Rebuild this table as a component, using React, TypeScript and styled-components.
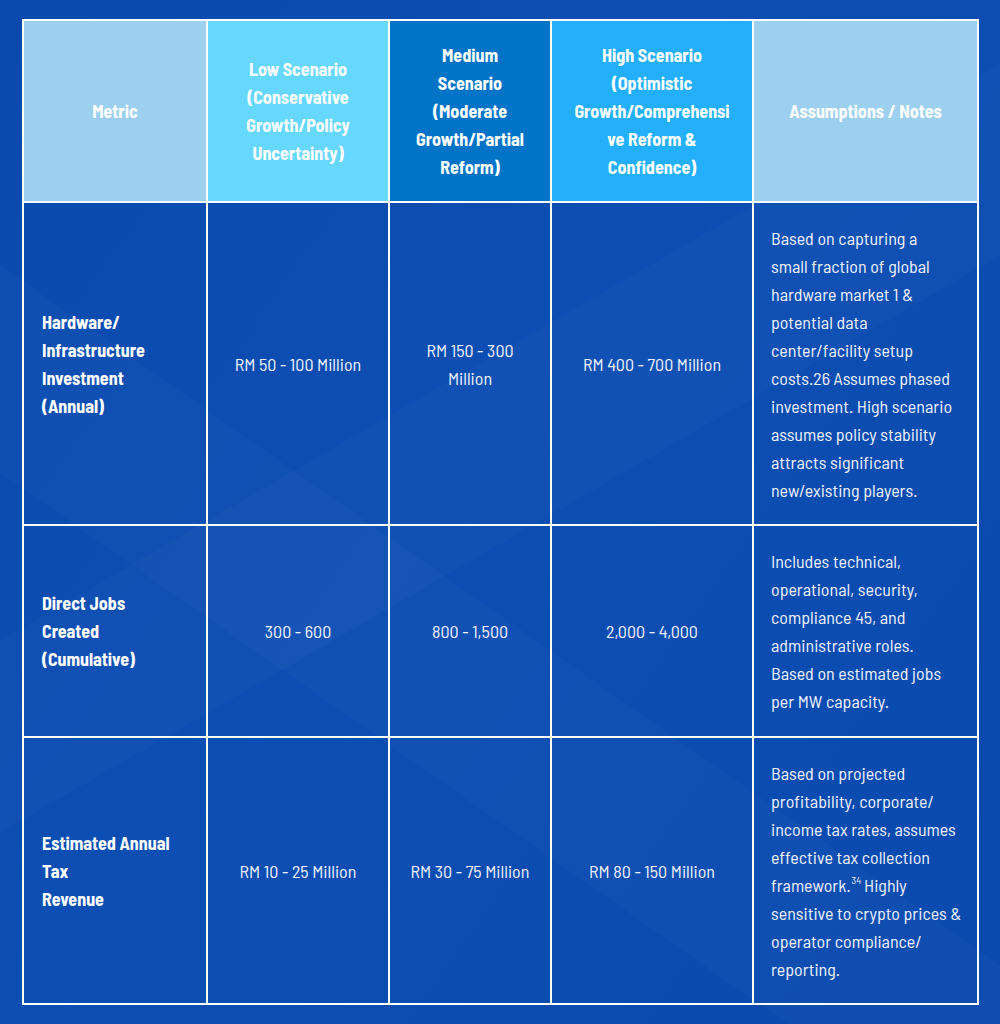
import React from "react";
import styled, { createGlobalStyle } from "styled-components";

const GlobalStyle = createGlobalStyle`
  html, body {
    margin: 0;
    padding: 0;
  }
  body {
    background: #0a4baf;
    font-family: "Barlow Semi Condensed", "Roboto Condensed", "Liberation Sans", sans-serif;
  }
`;

const Page = styled.div`
  width: 1000px;
  height: 1024px;
  box-sizing: border-box;
  padding: 19px 21px 0 22px;
  background:
    linear-gradient(150deg, transparent 0%, transparent 40%, rgba(255,255,255,0.02) 40%, rgba(255,255,255,0.02) 52%, transparent 52%),
    linear-gradient(35deg, transparent 0%, transparent 32%, rgba(255,255,255,0.018) 32%, rgba(255,255,255,0.018) 44%, transparent 44%),
    linear-gradient(125deg, #0a4aae 0%, #0c4eb3 45%, #0a4aae 100%);
`;

const Table = styled.table`
  width: 955px;
  table-layout: fixed;
  border-collapse: collapse;
  border: 2px solid #ffffff;
`;

const HeadCell = styled.th<{ $bg: string }>`
  background: ${(p) => p.$bg};
  border: 2px solid #ffffff;
  color: #ffffff;
  font-weight: 700;
  font-size: 18px;
  line-height: 28px;
  text-align: center;
  vertical-align: middle;
  padding: 0 16px;
`;

const Row = styled.tr<{ $h: number }>`
  height: ${(p) => p.$h}px;
`;

const MetricCell = styled.td`
  border: 2px solid #ffffff;
  color: #ffffff;
  font-weight: 700;
  font-size: 18px;
  line-height: 28px;
  text-align: left;
  vertical-align: middle;
  padding: 0 18px;
`;

const ValueCell = styled.td`
  border: 2px solid #ffffff;
  color: #edf1fb;
  font-weight: 400;
  font-size: 18px;
  line-height: 28px;
  text-align: center;
  vertical-align: middle;
  padding: 0 16px;
`;

const NoteCell = styled.td`
  border: 2px solid #ffffff;
  color: #edf1fb;
  font-weight: 400;
  font-size: 18px;
  line-height: 28px;
  text-align: left;
  vertical-align: middle;
  padding: 0 14px 0 17px;
`;

const Sup = styled.sup`
  font-size: 10px;
  line-height: 0;
  vertical-align: 8px;
  margin: 0 3px 0 1px;
`;

const headers = [
  { bg: "#9dcfee", text: ["Metric"] },
  { bg: "#66d7fe", text: ["Low Scenario", "(Conservative", "Growth/Policy", "Uncertainty)"] },
  { bg: "#0274c8", text: ["Medium", "Scenario", "(Moderate", "Growth/Partial", "Reform)"] },
  { bg: "#23affc", text: ["High Scenario", "(Optimistic", "Growth/Comprehensi", "ve Reform &", "Confidence)"] },
  { bg: "#9dcfee", text: ["Assumptions / Notes"] },
];

const colWidths = [184, 182, 162, 202, 225];

const Lines = ({ lines }: { lines: string[] }) => (
  <>
    {lines.map((l, i) => (
      <React.Fragment key={i}>
        {i > 0 && <br />}
        {l}
      </React.Fragment>
    ))}
  </>
);

export default function App() {
  return (
    <>
      <GlobalStyle />
      <Page>
        <Table>
          <colgroup>
            {colWidths.map((w, i) => (
              <col key={i} style={{ width: w }} />
            ))}
          </colgroup>
          <thead>
            <Row $h={182}>
              {headers.map((h, i) => (
                <HeadCell key={i} $bg={h.bg}>
                  <Lines lines={h.text} />
                </HeadCell>
              ))}
            </Row>
          </thead>
          <tbody>
            <Row $h={323}>
              <MetricCell>
                <Lines lines={["Hardware/", "Infrastructure", "Investment", "(Annual)"]} />
              </MetricCell>
              <ValueCell>RM 50 - 100 Million</ValueCell>
              <ValueCell>
                <Lines lines={["RM 150 - 300", "Million"]} />
              </ValueCell>
              <ValueCell>RM 400 - 700 Million</ValueCell>
              <NoteCell>
                <Lines
                  lines={[
                    "Based on capturing a",
                    "small fraction of global",
                    "hardware market 1 &",
                    "potential data",
                    "center/facility setup",
                    "costs.26 Assumes phased",
                    "investment. High scenario",
                    "assumes policy stability",
                    "attracts significant",
                    "new/existing players.",
                  ]}
                />
              </NoteCell>
            </Row>
            <Row $h={212}>
              <MetricCell>
                <Lines lines={["Direct Jobs", "Created", "(Cumulative)"]} />
              </MetricCell>
              <ValueCell>300 - 600</ValueCell>
              <ValueCell>800 - 1,500</ValueCell>
              <ValueCell>2,000 - 4,000</ValueCell>
              <NoteCell>
                <Lines
                  lines={[
                    "Includes technical,",
                    "operational, security,",
                    "compliance 45, and",
                    "administrative roles.",
                    "Based on estimated jobs",
                    "per MW capacity.",
                  ]}
                />
              </NoteCell>
            </Row>
            <Row $h={267}>
              <MetricCell>
                <Lines lines={["Estimated Annual", "Tax", "Revenue"]} />
              </MetricCell>
              <ValueCell>RM 10 - 25 Million</ValueCell>
              <ValueCell>RM 30 - 75 Million</ValueCell>
              <ValueCell>RM 80 - 150 Million</ValueCell>
              <NoteCell>
                Based on projected
                <br />
                profitability, corporate/
                <br />
                income tax rates, assumes
                <br />
                effective tax collection
                <br />
                framework.<Sup>34</Sup>Highly
                <br />
                sensitive to crypto prices &amp;
                <br />
                operator compliance/
                <br />
                reporting.
              </NoteCell>
            </Row>
          </tbody>
        </Table>
      </Page>
    </>
  );
}
